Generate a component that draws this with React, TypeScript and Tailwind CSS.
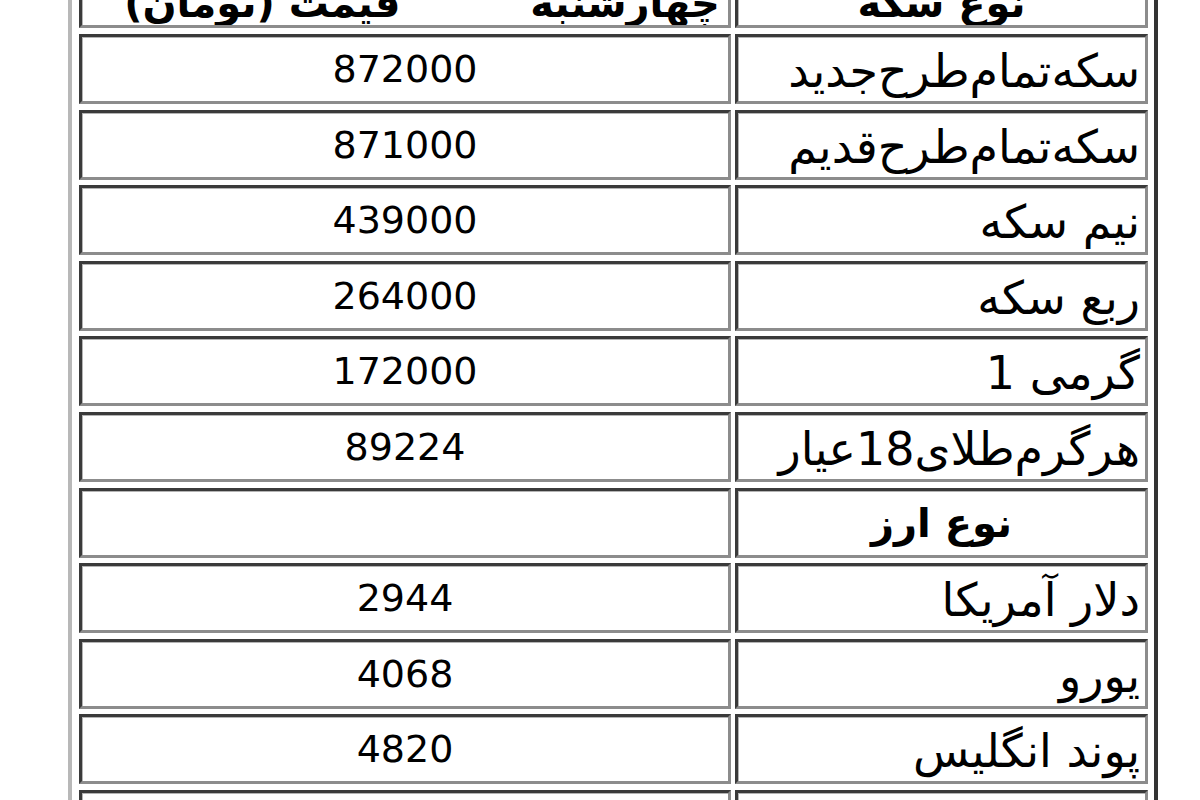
const rows: Array<{ name: string; price: string; head?: boolean }> = [
  { name: 'سکه‌تمام‌طرح‌جدید', price: '872000' },
  { name: 'سکه‌تمام‌طرح‌قدیم', price: '871000' },
  { name: 'نیم سکه', price: '439000' },
  { name: 'ربع سکه', price: '264000' },
  { name: ['1', 'گرمی'].join(' '), price: '172000' },
  { name: 'هرگرم‌طلای18عیار', price: '89224' },
  { name: 'نوع ارز', price: '', head: true },
  { name: 'دلار آمریکا', price: '2944' },
  { name: 'یورو', price: '4068' },
  { name: 'پوند انگلیس', price: '4820' },
  { name: '', price: '' },
];

const cell =
  'h-[70px] border-[3px] border-t-[#3a3a3a] border-l-[#3a3a3a] border-b-[#8c8c8c] border-r-[#8c8c8c] shadow-[inset_1px_1px_0_#b4b4b4] flex items-center overflow-hidden whitespace-nowrap';

export default function App() {
  return (
    <div className="w-[1200px] h-[800px] overflow-hidden bg-white text-black font-['DejaVu_Sans',sans-serif] text-[38px] leading-none">
      <div className="ml-[68px] w-[1090px] -mt-[52.6px] border-[4px] border-t-[#b8b8b8] border-l-[#b8b8b8] border-r-[#333333] border-b-[#333333] pt-[7px] pl-[7px] pr-[5px]">
        <div className="grid grid-cols-[652px_413px] gap-x-[4px] gap-y-[5.6px]">
          {/* header row, mostly cut off at the top */}
          <div className={`${cell} justify-center font-bold text-[40px] pl-[34px] pt-[20px]`} dir="rtl">
            <span>چهارشنبه</span>
            <span className="inline-block w-[130px]" />
            <span>قیمت (تومان)</span>
          </div>
          <div className={`${cell} justify-center font-bold text-[40px] pt-[20px]`} dir="rtl">
            نوع سکه
          </div>

          {rows.map((r, i) => (
            <div key={i} className="contents">
              <div className={`${cell} justify-center`}>{r.price}</div>
              {r.head ? (
                <div className={`${cell} justify-center font-bold text-[40px]`} dir="rtl">
                  {r.name}
                </div>
              ) : (
                <div className={`${cell} justify-end pr-[5px] text-[46px]`} dir="ltr">
                  <span className="pt-[4px]">{r.name}</span>
                </div>
              )}
            </div>
          ))}
        </div>
      </div>
    </div>
  );
}
